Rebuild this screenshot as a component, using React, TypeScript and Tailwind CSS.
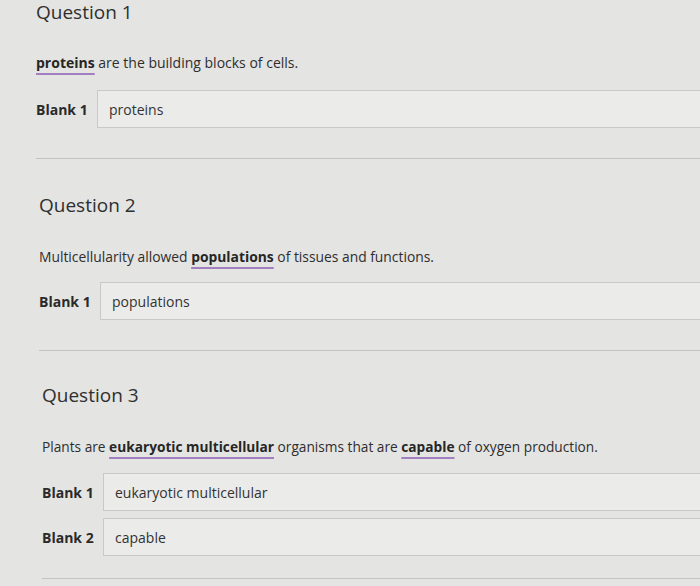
import React from "react";

const U = ({ children }: { children: React.ReactNode }) => (
  <span className="font-bold text-[#262626] underline decoration-[#a27fc2] decoration-2 underline-offset-[5px]">
    {children}
  </span>
);

const Row = ({ label, value, cls }: { label: string; value: string; cls: string }) => (
  <div className={`flex items-center ${cls}`}>
    <span className="w-[61px] shrink-0 text-[14px] font-bold text-[#2a2a2a]">{label}</span>
    <div className="flex h-[38px] flex-1 items-center border border-r-0 border-[#c9c9c7] bg-[#ebebea] pl-[11px] text-[14px] text-[#333]">
      {value}
    </div>
  </div>
);

export default function App() {
  return (
    <div
      className="h-[586px] w-[700px] overflow-hidden bg-[#e4e4e2] text-[#2e2e2e]"
      style={{ fontFamily: '"Open Sans", "Noto Sans", sans-serif' }}
    >
      <section className="pl-[36px]">
        <h2 className="text-[19px] leading-[24px] text-[#2f2f2f]">Question 1</h2>
        <p className="mt-[29px] text-[14px] leading-[20px]">
          <U>proteins</U> are the building blocks of cells.
        </p>
        <Row label="Blank 1" value="proteins" cls="mt-[17px]" />
        <div className="mt-[30px] h-px bg-[#c3c3c1]" />
      </section>

      <section className="pl-[39px]">
        <h2 className="mt-[35px] text-[19px] leading-[22px] text-[#2f2f2f]">Question 2</h2>
        <p className="mt-[31px] text-[13.85px] leading-[20px]">
          Multicellularity allowed <U>populations</U> of tissues and functions.
        </p>
        <Row label="Blank 1" value="populations" cls="mt-[15px]" />
        <div className="mt-[30px] h-px bg-[#c3c3c1]" />
      </section>

      <section className="pl-[42px]">
        <h2 className="mt-[33px] text-[19px] leading-[22px] text-[#2f2f2f]">Question 3</h2>
        <p className="mt-[31px] text-[13.7px] leading-[20px]">
          Plants are <U>eukaryotic multicellular</U> organisms that are <U>capable</U> of oxygen production.
        </p>
        <Row label="Blank 1" value="eukaryotic multicellular" cls="mt-[16px]" />
        <Row label="Blank 2" value="capable" cls="mt-[7px]" />
        <div className="mt-[22px] h-px bg-[#c3c3c1]" />
      </section>
    </div>
  );
}
